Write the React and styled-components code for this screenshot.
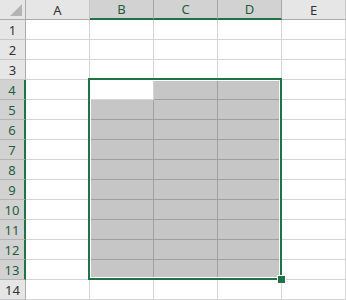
import React from "react";
import styled, { createGlobalStyle } from "styled-components";

const GlobalStyle = createGlobalStyle`
  html, body {
    margin: 0;
    padding: 0;
    background: #ffffff;
    font-family: "Noto Sans", "Open Sans", "DejaVu Sans", sans-serif;
  }
`;

const COLS = ["A", "B", "C", "D", "E"];
const ROWS = 14;
const SEL_COLS = ["B", "C", "D"];
const SEL_ROW_START = 4;
const SEL_ROW_END = 13;

const Sheet = styled.div`
  position: relative;
  display: grid;
  grid-template-columns: 26px repeat(5, 64px);
  grid-auto-rows: 20px;
  width: 346px;
  overflow: hidden;
`;

const Corner = styled.div`
  box-sizing: border-box;
  background: #e6e6e6;
  border-right: 1px solid #ababab;
  border-bottom: 1px solid #ababab;
  display: flex;
  align-items: flex-end;
  justify-content: flex-end;
  padding: 0 3px 3px 0;
`;

const ColHeader = styled.div`
  box-sizing: border-box;
  display: flex;
  align-items: center;
  justify-content: center;
  font-size: 13px;
  color: ${(p) => (p.$selected ? "#1e5e3a" : "#333333")};
  background: ${(p) => (p.$selected ? "#d2d2d2" : "#e6e6e6")};
  border-right: 1px solid ${(p) => (p.$selected ? "#a6a6a6" : "#c6c6c6")};
  border-bottom: ${(p) => (p.$selected ? "2px solid #217346" : "1px solid #ababab")};
`;

const RowHeader = styled.div`
  box-sizing: border-box;
  display: flex;
  align-items: center;
  justify-content: center;
  font-size: 13px;
  color: ${(p) => (p.$selected ? "#1e5e3a" : "#333333")};
  background: ${(p) => (p.$selected ? "#d2d2d2" : "#e6e6e6")};
  border-bottom: 1px solid ${(p) => (p.$selected ? "#b4b4b4" : "#c6c6c6")};
  border-right: ${(p) => (p.$selected ? "2px solid #217346" : "1px solid #ababab")};
`;

const Cell = styled.div`
  box-sizing: border-box;
  background: ${(p) => (p.$shaded ? "#c6c6c6" : "#ffffff")};
  border-right: 1px solid ${(p) => (p.$shaded ? "#a0a0a0" : "#d4d4d4")};
  border-bottom: 1px solid ${(p) => (p.$shaded ? "#a0a0a0" : "#d4d4d4")};
`;

const Selection = styled.div`
  position: absolute;
  left: 88px;
  top: 78px;
  width: 194px;
  height: 202px;
  box-sizing: border-box;
  border: 2px solid #217346;
  box-shadow: inset 0 0 0 1px #ffffff;
  pointer-events: none;
`;

const FillHandle = styled.div`
  position: absolute;
  right: -5px;
  bottom: -5px;
  width: 7px;
  height: 7px;
  box-sizing: border-box;
  background: #217346;
  outline: 1px solid #ffffff;
`;

function CornerTriangle() {
  return (
    <svg width="12" height="12" viewBox="0 0 12 12">
      <polygon points="12,0 12,12 0,12" fill="#b4b4b4" />
    </svg>
  );
}

export default function App() {
  const rows = Array.from({ length: ROWS }, (_, i) => i + 1);
  return (
    <>
      <GlobalStyle />
      <Sheet>
        <Corner>
          <CornerTriangle />
        </Corner>
        {COLS.map((c) => (
          <ColHeader key={c} $selected={SEL_COLS.includes(c)}>
            {c}
          </ColHeader>
        ))}
        {rows.map((r) => {
          const rowSel = r >= SEL_ROW_START && r <= SEL_ROW_END;
          return (
            <React.Fragment key={r}>
              <RowHeader $selected={rowSel}>{r}</RowHeader>
              {COLS.map((c) => {
                const active = c === "B" && r === SEL_ROW_START;
                const shaded = rowSel && SEL_COLS.includes(c) && !active;
                return <Cell key={c + r} $shaded={shaded} />;
              })}
            </React.Fragment>
          );
        })}
        <Selection>
          <FillHandle />
        </Selection>
      </Sheet>
    </>
  );
}
